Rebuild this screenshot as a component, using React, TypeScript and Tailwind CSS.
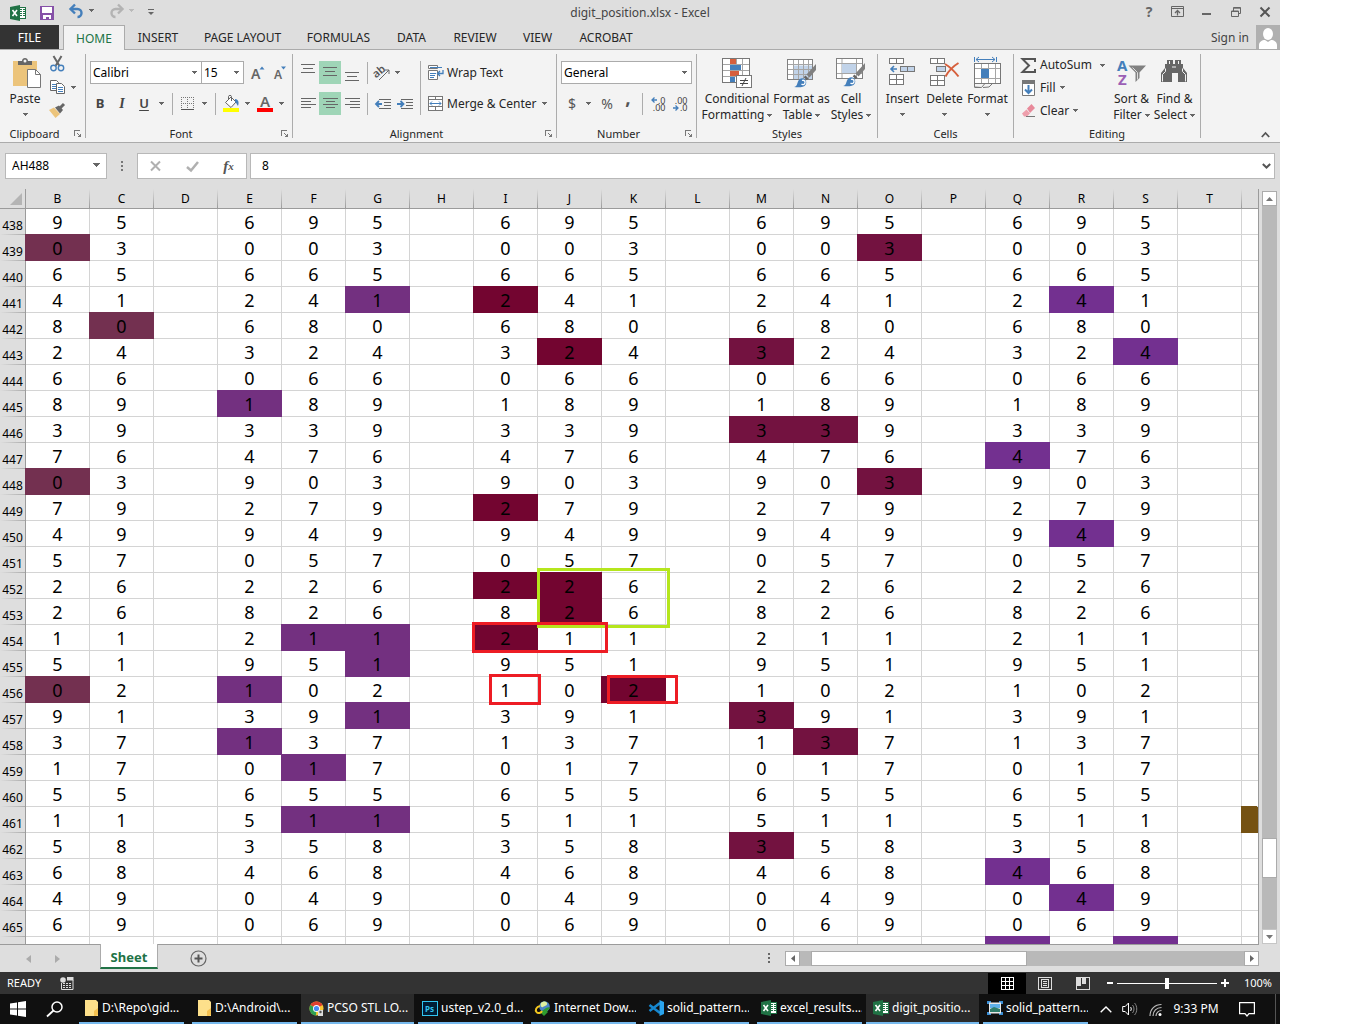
import type { ReactNode } from "react";

const UI = "font-['Noto_Sans','Open_Sans',sans-serif]";

/* ---------- small building blocks ---------- */

function Caret({ className = "text-[#666]" }: { className?: string }) {
  return (
    <svg width="5" height="3" viewBox="0 0 5 3" shapeRendering="crispEdges" className={`shrink-0 ${className}`} aria-hidden="true">
      <path d="M0 0h5v1H0zM1 1h3v1H1zM2 2h1v1H2z" fill="currentColor" />
    </svg>
  );
}

function Svg({ w, h, children, crisp = false, className = "" }: { w: number; h: number; children: ReactNode; crisp?: boolean; className?: string }) {
  return (
    <svg width={w} height={h} viewBox={`0 0 ${w} ${h}`} fill="none" shapeRendering={crisp ? "crispEdges" : "auto"} className={`shrink-0 overflow-visible ${className}`} aria-hidden="true">
      {children}
    </svg>
  );
}

function Btn({ label, className = "", children }: { label: string; className?: string; children?: ReactNode }) {
  return (
    <button type="button" aria-label={label} className={`flex shrink-0 items-center justify-center ${className}`}>
      {children}
    </button>
  );
}

const Divider = () => <div className="h-[84px] w-px shrink-0 bg-[#acacac]" />;
const Sep = () => <div className="h-[22px] w-px shrink-0 bg-[#acacac]" />;

function Launcher({ label }: { label: string }) {
  return (
    <Btn label={label} className="absolute right-[3px] bottom-1 h-[8px] w-[8px]">
      <Svg w={8} h={8} crisp>
        <path d="M0.500 6V0.500H6" stroke="#777" />
        <path d="M3 3l3 3" stroke="#777" />
        <path d="M7 3v4H3z" fill="#777" />
      </Svg>
    </Btn>
  );
}

function Group({ name, launcher, className, children }: { name: string; launcher?: boolean; className: string; children: ReactNode }) {
  return (
    <section aria-label={name} className={`relative flex h-[88px] shrink-0 flex-col ${className}`}>
      <div className="h-[71px]">{children}</div>
      <div className={`text-center text-[11px] leading-[17px] text-[#262626] ${launcher ? "pr-4" : ""}`}>{name}</div>
      {launcher && <Launcher label={`${name} settings`} />}
    </section>
  );
}

/* ---------- icons ---------- */

function ExcelIcon() {
  return (
    <Svg w={16} h={16}>
      <rect x="8.500" y="2.500" width="7" height="11" fill="#fff" stroke="#207245" />
      <path d="M10 4.500h2M13 4.500h2M10 6.500h2M13 6.500h2M10 8.500h2M13 8.500h2M10 10.500h2M13 10.500h2" stroke="#207245" />
      <path d="M0 2l10-2v16L0 14z" fill="#207245" />
      <path d="M2.500 5l4.500 6M7 5l-4.500 6" stroke="#fff" strokeWidth="1.600" />
    </Svg>
  );
}

function BrushTip({ x = 0, y = 0 }: { x?: number; y?: number }) {
  return (
    <g transform={`translate(${x} ${y})`}>
      <path d="M22 -1V5L15.500 12.500l-3-3z" fill="#808080" />
      <path d="M11.500 10.500l3 3-1.800 1.700-3-3z" fill="#666" />
      <path d="M0 22c3-.5 3-3 4-5.500 1.500-3.500 5-4 7-2s1.500 5-.5 6.500S4 22.500 0 22z" fill="#447fbb" />
      <path d="M8 15.500c2-.8 3.500.8 3 2.500s-2.500 2-3.500 1" stroke="#fff" strokeWidth="1.300" />
    </g>
  );
}

function FormatTableIcon() {
  return (
    <Svg w={30} h={30}>
      <rect x="0.500" y="2.500" width="25" height="20" fill="#fff" stroke="#808080" />
      <path d="M6.500 8.500h19v14h-19z" fill="#c1d3e9" />
      <path d="M1 7.500h24M1 12.500h24M1 17.500h24M6.500 3v19M11.500 3v19M16.500 3v19M21.500 3v19" stroke="#a5a5a5" />
      <rect x="0.500" y="2.500" width="25" height="20" stroke="#808080" />
      <BrushTip x={7} y={8} />
    </Svg>
  );
}

function CellStylesIcon() {
  return (
    <Svg w={30} h={30}>
      <rect x="0.500" y="1.500" width="26" height="20" fill="#fff" stroke="#808080" />
      <path d="M6 2v19M20.500 2v19M1 6.500h25M1 16.500h25" stroke="#a5a5a5" />
      <rect x="6" y="7" width="14" height="9" fill="#c1d3e9" />
      <BrushTip x={7} y={7} />
    </Svg>
  );
}

function ConditionalIcon() {
  return (
    <Svg w={30} h={31} crisp>
      <rect x="0.500" y="1.500" width="27" height="24" fill="#fff" stroke="#777" />
      <path d="M8.500 2v23M14.500 2v23M20.500 2v23M1 7.500h26M1 13.500h26M1 19.500h26" stroke="#a5a5a5" />
      <rect x="8" y="2" width="6" height="5" fill="#d65f3c" />
      <rect x="8" y="8" width="11" height="5" fill="#447fbb" />
      <rect x="8" y="14" width="9" height="5" fill="#d65f3c" />
      <rect x="8" y="20" width="5" height="5" fill="#447fbb" />
      <rect x="14.500" y="18.500" width="15" height="12" fill="#fff" stroke="#777" />
      <path d="M18 23.500h8M18 26.500h8M24 21l-4 8" stroke="#444" shapeRendering="auto" />
    </Svg>
  );
}

function InsertIcon() {
  return (
    <Svg w={27} h={30} crisp>
      <path d="M.5 1.500h14v5H.5zM7.500 1v5M.5 17.500h14v10H.5zM7.500 18v9M1 22.500h13" fill="#fff" stroke="#777" />
      <path d="M11.500 9.500h14v5h-14zM18.500 9v5" fill="#c1d3e9" stroke="#777" />
      <path d="M2 12h6M5 9l-3 3 3 3" stroke="#447fbb" strokeWidth="1.600" shapeRendering="auto" />
    </Svg>
  );
}

function DeleteIcon() {
  return (
    <Svg w={30} h={30}>
      <g shapeRendering="crispEdges">
        <path d="M.5 1.500h14v5H.5zM7.500 1v5M.5 18.500h14v10H.5zM7.500 19v9M1 23.500h13" fill="#fff" stroke="#777" />
        <path d="M6.500 9.500h9v5h-9z" fill="#c1d3e9" stroke="#777" />
      </g>
      <path d="M15 7c5 3 10 8 13.500 12.500M28.500 6c-5 3-10 8-13 13.500" stroke="#d65f3c" strokeWidth="2" />
    </Svg>
  );
}

function FormatIcon() {
  return (
    <Svg w={29} h={32} crisp>
      <path d="M1.500 0v5M23.500 0v5" stroke="#447fbb" />
      <path d="M3 2.500h19M6 0L3 2.500 6 5M19 0l3 2.500L19 5" stroke="#447fbb" shapeRendering="auto" />
      <rect x="1.500" y="6.500" width="26" height="20" fill="#fff" stroke="#777" />
      <path d="M8.500 7v19M15.500 7v19M22.500 7v19M2 11.500h25M2 21.500h25" stroke="#a5a5a5" />
      <rect x="8" y="12" width="8" height="9" fill="#447fbb" />
      <path d="M1.500 27v3l7 .5 3-3.500M10 30.500l6-.5 3-3M1.500 30.500h6" stroke="#777" shapeRendering="auto" />
    </Svg>
  );
}

function SortIcon() {
  return (
    <Svg w={30} h={30}>
      <text x="0" y="14" fill="#447fbb" fontSize="15" fontWeight="700">A</text>
      <text x="1" y="28" fill="#9b5fb5" fontSize="15" fontWeight="700">Z</text>
      <path d="M11.500 8.500h17.500l-6.500 7v5.500l-4 4v-9.500z" fill="#808080" />
      <path d="M15.500 10.500l5 5v7" stroke="#ddd" />
    </Svg>
  );
}

function BinocularsIcon() {
  return (
    <Svg w={27} h={25} className="mt-[2px]">
      <path d="M6 1h6v4h2V1h6v4h2v4l4 5v9h-9v-9h-6v9H0v-9l4-5V5h2z" fill="#666" />
      <path d="M4.500 9.500v3l-3 3v7M21.500 9.500v3l3 3v7M8.500 2v3M17.500 2v3" stroke="#f3f3f3" />
      <path d="M11 8h4" stroke="#f3f3f3" />
    </Svg>
  );
}

const lineSets: Record<string, [number, number][]> = {
  left: [[0, 15], [0, 10], [0, 15], [0, 10]],
  center: [[0, 15], [3, 12], [0, 15], [3, 12]],
  right: [[0, 15], [5, 15], [0, 15], [5, 15]],
  bar: [[0, 14], [2, 12], [0, 14]],
};

function Lines({ kind, gap = 3 }: { kind: string; gap?: number }) {
  const rows = lineSets[kind];
  return (
    <Svg w={15} h={11} crisp>
      {rows.map(([a, b], i) => (
        <path key={i} d={`M${a} ${i * gap + 0.5}H${b}`} stroke="#666" />
      ))}
    </Svg>
  );
}

function IndentIcon({ flip = false }: { flip?: boolean }) {
  return (
    <Svg w={16} h={12}>
      <path d="M4 1.500h12M9 4.500h7M9 7.500h7M4 10.500h12" stroke="#666" shapeRendering="crispEdges" />
      <path d={flip ? "M0 6h6M3.500 3l3 3-3 3" : "M7 6H1M4 3L1 6l3 3"} stroke="#447fbb" strokeWidth="1.800" />
    </Svg>
  );
}

function DecimalIcon({ more }: { more: boolean }) {
  return (
    <span className="relative flex h-[14px] w-[15px] flex-col text-right text-[9px] leading-[7px] text-[#444]">
      <span>{more ? ".0" : ".00"}</span>
      <span>{more ? ".00" : ".0"}</span>
      <svg width="6" height="6" viewBox="0 0 6 6" fill="none" className={`absolute left-0 ${more ? "top-0" : "bottom-0"}`} aria-hidden="true">
        <path d={more ? "M6 3H1M3.500 .5L1 3l2.500 2.500" : "M0 3h5M2.500 .5L5 3 2.500 5.500"} stroke="#447fbb" strokeWidth="1.300" />
      </svg>
    </span>
  );
}

/* ---------- window chrome ---------- */

function TitleBar() {
  return (
    <header className="flex h-[25px] items-center text-[#444]">
      <div className="flex w-[400px] items-center pl-[10px]">
        <ExcelIcon />
        <Btn label="Save" className="ml-[14px]">
          <Svg w={14} h={14} crisp>
            <path d="M0 0h14v14H0z" fill="#8651a8" />
            <path d="M2 1h10v6H2zM3 9h8v4H9v-2H6v2H3z" fill="#fff" />
          </Svg>
        </Btn>
        <Btn label="Undo" className="ml-[15px] pb-[3px]">
          <Svg w={15} h={14}>
            <path d="M2 5h6.500a4 4 0 0 1 0 8" stroke="#447fbb" strokeWidth="2.400" />
            <path d="M6 .5L1.500 5 6 9.500" stroke="#447fbb" strokeWidth="2.400" />
          </Svg>
        </Btn>
        <Btn label="Undo list" className="ml-[5px] pb-1"><Caret /></Btn>
        <Btn label="Redo" className="ml-[15px] pb-[3px]">
          <Svg w={15} h={14}>
            <path d="M13 5H6.500a4 4 0 0 0 0 8" stroke="#b3b3b3" strokeWidth="2.400" />
            <path d="M9 .5L13.500 5 9 9.500" stroke="#b3b3b3" strokeWidth="2.400" />
          </Svg>
        </Btn>
        <Btn label="Redo list" className="ml-[5px] pb-1"><Caret className="text-[#bbb]" /></Btn>
        <Btn label="Customize Quick Access Toolbar" className="ml-[14px]">
          <Svg w={6} h={7}><path d="M0 .5h6" stroke="#666" /><path d="M0 3h6L3 6z" fill="#666" /></Svg>
        </Btn>
      </div>
      <h1 className="flex-1 text-center text-[12px] leading-[25px]">digit_position.xlsx - Excel</h1>
      <div className="flex w-[400px] items-center justify-end pr-[10px] pb-[2px] text-[#666]">
        <Btn label="Help" className="w-4 text-[14px] leading-4 font-bold">?</Btn>
        <Btn label="Ribbon Display Options" className="ml-[14px]">
          <Svg w={13} h={11}><path d="M.5.5h12v10H.5zM1 2.500h11" stroke="#666" /><path d="M6.500 9.500v-5M4 7l2.500-2.500L9 7" stroke="#666" strokeWidth="1.300" /></Svg>
        </Btn>
        <Btn label="Minimize" className="ml-[17px]">
          <Svg w={10} h={10}><path d="M1 7h9" stroke="#666" strokeWidth="2" /></Svg>
        </Btn>
        <Btn label="Restore Down" className="ml-5">
          <Svg w={10} h={10}><path d="M.5 4h7v5.500h-7zM.5 4.500h7M2.500 4V.5h7v6H8M2.500 1.200h7" stroke="#666" /></Svg>
        </Btn>
        <Btn label="Close" className="ml-[19px]">
          <Svg w={10} h={10}><path d="M.5.5l9 9M9.500.5l-9 9" stroke="#555" strokeWidth="2" /></Svg>
        </Btn>
      </div>
    </header>
  );
}

const tabs: [string, string][] = [
  ["INSERT", "w-[66px]"],
  ["PAGE LAYOUT", "w-[103px]"],
  ["FORMULAS", "w-[89px]"],
  ["DATA", "w-[57px]"],
  ["REVIEW", "w-[70px]"],
  ["VIEW", "w-[55px]"],
  ["ACROBAT", "w-[82px]"],
];

function TabStrip() {
  return (
    <nav className="flex h-[25px] border-b border-[#ababab] text-[12px] leading-[25px] text-[#262626]">
      <button type="button" className="mr-1 w-[59px] bg-[#333] text-white">FILE</button>
      <button type="button" className="relative h-[25px] w-[62px] border border-b-0 border-[#ababab] bg-[#f3f3f3] leading-[23px] text-[#217346]">HOME</button>
      {tabs.map(([name, width]) => (
        <button type="button" key={name} className={`${width} whitespace-nowrap`}>{name}</button>
      ))}
      <div className="ml-auto flex">
        <button type="button" className="mr-[7px] leading-[23px] text-[#444]">Sign in</button>
        <Svg w={24} h={24}>
          <rect width="24" height="24" fill="#b0b0b0" />
          <ellipse cx="12" cy="9" rx="5" ry="6" fill="#fff" />
          <path d="M3 24v-4c0-3 3-5 6-5l3 2 3-2c3 0 6 2 6 5v4z" fill="#fff" />
        </Svg>
      </div>
    </nav>
  );
}

function Combo({ label, value, className }: { label: string; value: string; className: string }) {
  return (
    <div className={`flex h-[23px] shrink-0 items-center border border-[#ababab] bg-white pr-1 ${className}`}>
      <select aria-label={label} defaultValue={value} className="h-full min-w-0 flex-1 appearance-none bg-transparent pl-[2px] text-[12px] leading-[21px] text-black">
        <option>{value}</option>
      </select>
      <Caret />
    </div>
  );
}

function Big({ icon, lines, caret, className }: { icon: ReactNode; lines: string[]; caret: "inline" | "below"; className: string }) {
  return (
    <button type="button" className={`flex h-[71px] shrink-0 flex-col items-center text-[12px] leading-4 whitespace-nowrap text-[#262626] ${className}`}>
      <span className="flex h-[37px] shrink-0 items-start justify-center pt-[3px]">{icon}</span>
      {lines.map((line, i) => (
        <span key={line} className="flex h-4 shrink-0 items-center gap-[3px]">
          {line}
          {caret === "inline" && i === lines.length - 1 && <Caret />}
        </span>
      ))}
      {caret === "below" && <span className="flex h-[18px] w-full shrink-0 items-center justify-center pb-[3px]"><Caret /></span>}
    </button>
  );
}

function Ribbon() {
  return (
    <div className="flex h-[93px] border-b border-[#ababab] bg-[#f3f3f3] pt-1">
      <Group name="Clipboard" launcher className="w-[85px]">
        <div className="flex">
          <Big
            className="ml-[5px] w-[40px]"
            caret="below"
            lines={["Paste"]}
            icon={
              <Svg w={30} h={31} className="ml-[4px]">
                <path d="M1 4h24v25H1z" fill="#ecc47b" />
                <path d="M6 8V4h4c0-4 6-4 6 0h4v4z" fill="#666" />
                <circle cx="13" cy="4" r="1.500" fill="#f3f3f3" />
                <path d="M15.500 12.500h8l5 5v13h-13z" fill="#fff" stroke="#777" />
                <path d="M23.500 12.500v5h5" stroke="#777" />
              </Svg>
            }
          />
          <div className="ml-1 flex flex-col">
            <Btn label="Cut" className="mt-[2px] h-4 w-4">
              <Svg w={15} h={16}>
                <path d="M3.500 0l6 10M11.500 0l-6 10" stroke="#666" strokeWidth="2" />
                <circle cx="3.500" cy="12" r="2.700" stroke="#447fbb" strokeWidth="1.400" />
                <circle cx="11" cy="12" r="2.700" stroke="#447fbb" strokeWidth="1.400" />
              </Svg>
            </Btn>
            <div className="mt-[7px] flex items-center">
              <Btn label="Copy" className="h-4 w-4">
                <Svg w={15} h={15}>
                  <path d="M.5.500h6l2 2v8h-8z" fill="#fff" stroke="#666" />
                  <path d="M2 4.500h4M2 6.500h4M2 8.500h4" stroke="#447fbb" />
                  <path d="M6.500 3.500h5l3 3v7h-8z" fill="#fff" stroke="#666" />
                  <path d="M8 7.500h5M8 9.500h5M8 11.500h5" stroke="#447fbb" />
                </Svg>
              </Btn>
              <Btn label="Copy options" className="w-4"><Caret /></Btn>
            </div>
            <Btn label="Format Painter" className="mt-[7px] h-4 w-[17px]">
              <Svg w={17} h={15}>
                <path d="M0 7l5-2.500L11 11 6.500 15z" fill="#ecc47b" />
                <path d="M6 4.500l4-2 4 4.500-3 3.500z" fill="#666" />
                <path d="M11 5l4-4" stroke="#666" strokeWidth="3" />
              </Svg>
            </Btn>
          </div>
        </div>
      </Group>
      <Divider />
      <Group name="Font" launcher className="w-[206px]">
        <div className="flex flex-col gap-2 pt-[7px] text-[#444]">
          <div className="flex items-center pl-1">
            <Combo label="Font" value="Calibri" className="w-[112px]" />
            <Combo label="Font Size" value="15" className="-ml-px w-[43px]" />
            <Btn label="Increase Font Size" className="ml-[3px] h-[22px] w-[22px]">
              <Svg w={14} h={14}><text x="0" y="13" fontSize="14" fontWeight="600" fill="#666">A</text><path d="M8.500 3.500h5L11 .5z" fill="#447fbb" /></Svg>
            </Btn>
            <Btn label="Decrease Font Size" className="h-[22px] w-[22px]">
              <Svg w={12} h={14}><text x="0" y="13" fontSize="12" fontWeight="600" fill="#666">A</text><path d="M7 .5h5L9.500 3.500z" fill="#447fbb" /></Svg>
            </Btn>
          </div>
          <div className="flex h-[23px] items-center pl-[3px] text-[13px]">
            <Btn label="Bold" className="w-[22px] font-bold">B</Btn>
            <Btn label="Italic" className="w-[22px] font-['Liberation_Serif',serif] text-[14px] font-bold italic">I</Btn>
            <Btn label="Underline" className="w-[22px] font-semibold underline underline-offset-2">U</Btn>
            <Btn label="Underline options" className="w-[13px]"><Caret /></Btn>
            <div className="ml-[4px]"><Sep /></div>
            <Btn label="Borders" className="ml-[6px] w-[17px]">
              <Svg w={14} h={14} crisp>
                <path d="M.5 0v13M6.500 0v13M12.500 0v13M0 .5h13M0 6.500h13" stroke="#777" strokeDasharray="1 1" />
                <path d="M0 12.500h13" stroke="#555" />
              </Svg>
            </Btn>
            <Btn label="Border options" className="w-[16px]"><Caret /></Btn>
            <div className="ml-[3px]"><Sep /></div>
            <Btn label="Fill Color" className="ml-[6px] w-[18px]">
              <Svg w={17} h={17}>
                <path d="M2.500 7.500L8 2l5 5-5 5.500z" fill="#fff" stroke="#666" />
                <path d="M5.500 5V1.500c0-1.500 3-1.500 3 0V6" stroke="#666" />
                <path d="M12 4c3 0 4.500 3 3 7-1.500-2-2-4-3-4z" fill="#447fbb" />
                <path d="M0 13h16v4H0z" fill="#ff0" />
              </Svg>
            </Btn>
            <Btn label="Fill options" className="w-[14px]"><Caret /></Btn>
            <Btn label="Font Color" className="ml-[2px] w-[17px]">
              <Svg w={16} h={17}><text x="3" y="12" fontSize="15" fontWeight="600" fill="#666">A</text><path d="M0 13h16v4H0z" fill="#f00" /></Svg>
            </Btn>
            <Btn label="Font Color options" className="w-[16px]"><Caret /></Btn>
          </div>
        </div>
      </Group>
      <Divider />
      <Group name="Alignment" launcher className="w-[263px]">
        <div className="flex pt-[7px] text-[12px] whitespace-nowrap text-[#262626]">
          <div className="flex w-[127px] flex-col gap-2 pl-1">
            <div className="flex h-[23px] items-center">
              <Btn label="Top Align" className="h-[23px] w-[22px] pb-[6px]"><Lines kind="bar" gap={4} /></Btn>
              <Btn label="Middle Align" className="h-[23px] w-[22px] bg-[#9fd5b7]"><Lines kind="bar" gap={4} /></Btn>
              <Btn label="Bottom Align" className="h-[23px] w-[22px] pt-[10px]"><Lines kind="bar" gap={4} /></Btn>
              <div className="ml-1"><Sep /></div>
              <Btn label="Orientation" className="ml-[5px] w-[18px]">
                <Svg w={17} h={16}>
                  <text x="0" y="10" fontSize="11" fontWeight="600" fill="#555" transform="rotate(-40 6 9)">ab</text>
                  <path d="M5 15L15 5M11 5h4v4" stroke="#666" />
                </Svg>
              </Btn>
              <Btn label="Orientation options" className="w-3"><Caret /></Btn>
            </div>
            <div className="flex h-[23px] items-center">
              <Btn label="Align Left" className="h-[23px] w-[22px]"><Lines kind="left" /></Btn>
              <Btn label="Center" className="h-[23px] w-[22px] bg-[#9fd5b7]"><Lines kind="center" /></Btn>
              <Btn label="Align Right" className="h-[23px] w-[22px]"><Lines kind="right" /></Btn>
              <div className="ml-1"><Sep /></div>
              <Btn label="Decrease Indent" className="ml-1 w-[22px]"><IndentIcon /></Btn>
              <Btn label="Increase Indent" className="w-[22px]"><IndentIcon flip /></Btn>
            </div>
          </div>
          <div className="h-[54px] w-px bg-[#acacac]" />
          <div className="flex flex-col gap-2 pl-[7px]">
            <button type="button" className="flex h-[23px] items-center gap-[3px]">
              <Svg w={16} h={16}>
                <path d="M.5.500h9v3h-9zM.5 5.500h9v9h-9z" fill="#fff" stroke="#777" />
                <path d="M2 2.500h12M2 8.500h6M2 10.500h5M2 12.500h4" stroke="#447fbb" />
                <path d="M15 5v3.500H9.500M12 6L9.500 8.500 12 11" stroke="#447fbb" strokeWidth="1.300" />
              </Svg>
              Wrap Text
            </button>
            <div className="flex h-[23px] items-center">
              <button type="button" className="flex items-center gap-1">
                <Svg w={15} h={15} crisp>
                  <path d="M.5.500h14v14H.5zM7.500.500v3M7.500 11v3M1 3.500h13M1 10.500h13" fill="#fff" stroke="#777" />
                  <path d="M2 7.500h11M4 5.500l-2 2 2 2M11 5.500l2 2-2 2" stroke="#447fbb" shapeRendering="auto" />
                </Svg>
                Merge &amp; Center
              </button>
              <Btn label="Merge options" className="w-4"><Caret /></Btn>
            </div>
          </div>
        </div>
      </Group>
      <Divider />
      <Group name="Number" launcher className="w-[139px]">
        <div className="flex flex-col gap-2 pt-[7px] pl-1 text-[#555]">
          <Combo label="Number Format" value="General" className="w-[131px]" />
          <div className="flex h-[23px] items-center text-[14px]">
            <Btn label="Accounting Number Format" className="w-[22px]">$</Btn>
            <Btn label="Accounting options" className="w-[11px]"><Caret /></Btn>
            <Btn label="Percent Style" className="ml-[2px] w-[22px]">%</Btn>
            <Btn label="Comma Style" className="w-[20px] pb-[14px] text-[19px] leading-4 font-bold">,</Btn>
            <div className="ml-1"><Sep /></div>
            <Btn label="Increase Decimal" className="ml-1 w-[22px]"><DecimalIcon more /></Btn>
            <Btn label="Decrease Decimal" className="w-[22px]"><DecimalIcon more={false} /></Btn>
          </div>
        </div>
      </Group>
      <Divider />
      <Group name="Styles" className="w-[180px]">
        <div className="flex">
          <Big className="ml-[3px] w-[74px]" caret="inline" lines={["Conditional", "Formatting"]} icon={<ConditionalIcon />} />
          <Big className="w-[55px]" caret="inline" lines={["Format as", "Table"]} icon={<FormatTableIcon />} />
          <Big className="w-[44px]" caret="inline" lines={["Cell", "Styles"]} icon={<CellStylesIcon />} />
        </div>
      </Group>
      <Divider />
      <Group name="Cells" className="w-[135px]">
        <div className="flex pl-[4px]">
          <Big className="w-[41px]" caret="below" lines={["Insert"]} icon={<InsertIcon />} />
          <Big className="w-[43px]" caret="below" lines={["Delete"]} icon={<DeleteIcon />} />
          <Big className="w-[43px]" caret="below" lines={["Format"]} icon={<FormatIcon />} />
        </div>
      </Group>
      <Divider />
      <Group name="Editing" className="w-[186px]">
        <div className="flex">
          <div className="flex w-[97px] flex-col pl-[7px] text-[12px] text-[#262626]">
            <div className="flex h-[22px] items-center">
              <button type="button" className="flex items-center gap-1">
                <Svg w={15} h={15}><path d="M14 4V1H1.500L8 7.500 1.500 14H14v-3" stroke="#555" strokeWidth="2" /></Svg>
                AutoSum
              </button>
              <Btn label="AutoSum options" className="ml-[6px] w-[10px]"><Caret /></Btn>
            </div>
            <button type="button" className="flex h-[23px] items-center gap-1">
              <Svg w={15} h={16}>
                <path d="M1.500.500h12v15h-12z" fill="#fff" stroke="#777" /><path d="M1 0h13v4H1z" fill="#777" />
                <path d="M7.500 5v8M4 9.500L7.500 13 11 9.500" stroke="#447fbb" strokeWidth="2" />
              </Svg>
              Fill<Caret />
            </button>
            <button type="button" className="flex h-[23px] items-center gap-1">
              <Svg w={15} h={14}>
                <path d="M6 4.500L10.500 0 14 4l-5 5z" fill="#e8899a" />
                <path d="M5.500 5.500l3.500 4-3 3H3L1 9.500z" fill="#ee9fac" />
                <path d="M5 12.500h9" stroke="#777" />
              </Svg>
              Clear<Caret />
            </button>
          </div>
          <Big className="w-[41px]" caret="inline" lines={["Sort &", "Filter"]} icon={<SortIcon />} />
          <Big className="w-[45px]" caret="inline" lines={["Find &", "Select"]} icon={<BinocularsIcon />} />
        </div>
      </Group>
      <Divider />
      <Btn label="Collapse the Ribbon" className="mr-[10px] mb-1 ml-auto self-end">
        <Svg w={9} h={7}><path d="M.8 6l3.700-4L8.200 6" stroke="#555" strokeWidth="1.800" /></Svg>
      </Btn>
    </div>
  );
}

function FormulaBar() {
  return (
    <div className="flex items-center pt-[10px] pr-[5px] pb-[10px] pl-[5px] text-[12px]">
      <div className="flex h-[26px] w-[102px] items-center border border-[#b8b8b8] bg-white pr-[6px]">
        <input aria-label="Name Box" defaultValue="AH488" className="min-w-0 flex-1 bg-transparent pl-[6px]" />
        <Svg w={7} h={4} crisp className="mb-[2px]"><path d="M0 0h7v1H0zM1 1h5v1H1zM2 2h3v1H2zM3 3h1v1H3z" fill="#666" /></Svg>
      </div>
      <Svg w={2} h={12} className="mx-[14px]" crisp><path d="M0 1h2v2H0zM0 5h2v2H0zM0 9h2v2H0z" fill="#777" /></Svg>
      <div className="flex h-[26px] w-[110px] items-center justify-around border border-[#b8b8b8] bg-white">
        <Btn label="Cancel"><Svg w={11} h={10}><path d="M1 .5l9 9M10 .5l-9 9" stroke="#b0b0b0" strokeWidth="2" /></Svg></Btn>
        <Btn label="Enter"><Svg w={13} h={11}><path d="M1 6l4 3.500L12 1" stroke="#b0b0b0" strokeWidth="2.500" /></Svg></Btn>
        <Btn label="Insert Function" className="font-['Liberation_Serif',serif] text-[15px] leading-4 font-bold text-[#555] italic">f<span className="text-[11px]">x</span></Btn>
      </div>
      <div className="ml-[3px] flex h-[26px] flex-1 items-center border border-[#b8b8b8] bg-white pr-[3px]">
        <input aria-label="Formula" defaultValue="8" className="min-w-0 flex-1 bg-transparent pl-[11px]" />
        <Btn label="Expand Formula Bar"><Svg w={9} h={6}><path d="M.8 1l3.700 3.500L8.200 1" stroke="#555" strokeWidth="2" /></Svg></Btn>
      </div>
    </div>
  );
}

/* ---------- worksheet ---------- */

const columns = "BCDEFGHIJKLMNOPQRST".split("");
const draws = [
  "695", "003", "665", "241", "680", "324", "066", "189", "339", "476", "903", "279", "949", "057",
  "226", "826", "211", "951", "102", "391", "137", "017", "655", "511", "358", "468", "049", "069",
];
const FIRST_ROW = 438;

// Position of the drawn digit shown by each column, and the digit its block highlights.
const columnInfo: Record<string, [number, string]> = {
  B: [1, "0"], C: [2, "0"],
  E: [0, "1"], F: [1, "1"], G: [2, "1"],
  I: [0, "2"], J: [1, "2"], K: [2, "2"],
  M: [0, "3"], N: [1, "3"], O: [2, "3"],
  Q: [0, "4"], R: [1, "4"], S: [2, "4"],
};

const fills: Record<string, string> = {
  "0": "border-[#733050] bg-[#733050] shadow-[-1px_-1px_0_#733050,-1px_0_0_#733050,0_-1px_0_#733050]",
  "1": "border-[#733080] bg-[#733080] shadow-[-1px_-1px_0_#733080,-1px_0_0_#733080,0_-1px_0_#733080]",
  "2": "border-[#730530] bg-[#730530] shadow-[-1px_-1px_0_#730530,-1px_0_0_#730530,0_-1px_0_#730530]",
  "3": "border-[#731240] bg-[#731240] shadow-[-1px_-1px_0_#731240,-1px_0_0_#731240,0_-1px_0_#731240]",
  "4": "border-[#733090] bg-[#733090] shadow-[-1px_-1px_0_#733090,-1px_0_0_#733090,0_-1px_0_#733090]",
};

const rowHead = "border-r border-[#9b9b9b] bg-[linear-gradient(to_right,#dedede,#ababab)] bg-[length:100%_1px] bg-bottom bg-no-repeat";
const colHead = "bg-[linear-gradient(to_bottom,#dedede,#9b9b9b)] bg-[length:1px_100%] bg-right bg-no-repeat";

function Sheet() {
  return (
    <div className="flex">
      <div className="relative min-w-0 flex-1 overflow-hidden border-r border-[#9b9b9b]">
        <table className="w-full table-fixed border-separate border-spacing-0">
          <thead>
            <tr className="h-5 text-[12px] leading-[19px]">
              <th className="w-[26px] border-r border-b border-[#9b9b9b] p-0" aria-label="Select All">
                <Svg w={12} h={12} className="ml-[10px]"><path d="M12 0v12H0z" fill="#b4b4b4" /></Svg>
              </th>
              {columns.map((c) => (
                <th key={c} scope="col" className={`w-16 border-b border-b-[#9b9b9b] p-0 pr-px font-normal ${colHead}`}>{c}</th>
              ))}
              <th className="border-b border-[#9b9b9b] p-0" />
            </tr>
          </thead>
          <tbody className="text-[18px] leading-[23px]">
            {draws.map((draw, i) => (
              <tr key={i} className="h-[26px]">
                <th scope="row" className={`p-0 pt-[7px] text-center text-[12px] leading-[17px] font-normal ${rowHead}`}>{FIRST_ROW + i}</th>
                {columns.map((c) => {
                  const info = columnInfo[c];
                  const digit = info ? draw[info[0]] : "";
                  const on = info && digit === info[1];
                  return (
                    <td key={c} className={`border-r border-b p-0 pt-[2px] text-center ${on ? fills[digit] : "border-[#d4d4d4] bg-white"}`}>{digit}</td>
                  );
                })}
                <td className={`border-b p-0 ${FIRST_ROW + i === 461 ? "border-[#755213] bg-[#755213] shadow-[-1px_-1px_0_#755213,-1px_0_0_#755213]" : "border-[#d4d4d4] bg-white"}`} />
              </tr>
            ))}
            <tr className="h-[7px]">
              <th className="border-r border-[#9b9b9b] p-0" />
              {columns.map((c) => (
                <td key={c} className={`border-r p-0 ${c === "Q" || c === "S" ? fills["4"] : "border-[#d4d4d4] bg-white"}`} />
              ))}
              <td className="bg-white p-0" />
            </tr>
          </tbody>
        </table>
        <div className="absolute top-[379px] left-[537px] h-[60px] w-[133px] border-3 border-[#b5e61d]" />
        <div className="absolute top-[433px] left-[472px] h-[31px] w-[136px] border-3 border-[#ed1c24]" />
        <div className="absolute top-[485px] left-[489px] h-[31px] w-[52px] border-3 border-[#ed1c24]" />
        <div className="absolute top-[486px] left-[607px] h-[29px] w-[71px] border-3 border-[#ed1c24]" />
      </div>
      <div className="flex w-[21px] flex-col items-center pt-[2px] pr-px">
        <Btn label="Scroll up" className="h-[15px] w-[15px] border border-[#ababab] bg-white"><Svg w={7} h={4}><path d="M0 4h7L3.500 0z" fill="#777" /></Svg></Btn>
        <div className="flex w-[15px] flex-1 flex-col justify-end bg-[#b9b9b9] pb-[51px]">
          <div className="h-10 border border-[#ababab] bg-white" />
        </div>
        <Btn label="Scroll down" className="h-[15px] w-[15px] border border-[#c6c6c6] bg-white"><Svg w={7} h={4}><path d="M0 0h7L3.500 4z" fill="#777" /></Svg></Btn>
      </div>
    </div>
  );
}

function SheetTabs() {
  return (
    <div className="flex h-7 items-start">
      <div className="flex h-7 w-[100px] items-center border-t border-[#9b9b9b] pl-[26px]">
        <Btn label="Previous sheet"><Svg w={5} h={8}><path d="M5 0v8L0 4z" fill="#ababab" /></Svg></Btn>
        <Btn label="Next sheet" className="ml-[24px]"><Svg w={5} h={8}><path d="M0 0v8l5-4z" fill="#ababab" /></Svg></Btn>
      </div>
      <button type="button" className="h-[25px] w-[58px] border-x border-b-2 border-x-[#ababab] border-b-[#217346] bg-white pt-[3px] text-[13px] leading-5 font-bold text-[#217346]">Sheet</button>
      <div className="flex h-7 min-w-0 flex-1 items-center border-t border-[#9b9b9b]">
        <Btn label="New sheet" className="ml-8">
          <Svg w={17} h={17}><circle cx="8.500" cy="8.500" r="7.500" stroke="#666" strokeWidth="1.200" /><path d="M8.500 4.500v8M4.500 8.500h8" stroke="#555" strokeWidth="2" /></Svg>
        </Btn>
        <Svg w={2} h={11} className="mr-[15px] ml-auto" crisp><path d="M0 0h2v2H0zM0 4h2v2H0zM0 8h2v2H0z" fill="#666" /></Svg>
        <div className="flex h-[15px] w-[474px] bg-[#b9b9b9]">
          <Btn label="Scroll left" className="w-[15px] border border-[#ababab] bg-white"><Svg w={4} h={7}><path d="M4 0v7L0 3.500z" fill="#666" /></Svg></Btn>
          <div className="ml-[11px] w-[216px] border border-[#ababab] bg-white" />
          <Btn label="Scroll right" className="ml-auto w-[15px] border border-[#ababab] bg-white"><Svg w={4} h={7}><path d="M0 0v7l4-3.500z" fill="#666" /></Svg></Btn>
        </div>
      </div>
      <div className="h-7 w-[21px]" />
    </div>
  );
}

function StatusBar() {
  return (
    <div className="flex h-[22px] items-center bg-[#333] pl-[7px] text-[11px] text-white">
      <span>READY</span>
      <Btn label="Record Macro" className="ml-[19px]">
        <Svg w={14} h={13}>
          <path d="M13 3v9.500H1.500V6" stroke="#ddd" /><path d="M7 0h6.500v3.500H7z" fill="#ddd" />
          <circle cx="3" cy="3" r="2.800" fill="#ddd" />
          <path d="M3 6.500h9M3 8.500h9M3 10.500h9" stroke="#ddd" strokeDasharray="2 1" />
        </Svg>
      </Btn>
      <div className="ml-auto flex items-center">
        <Btn label="Normal" className="h-[21px] w-[38px] bg-black">
          <Svg w={13} h={13} crisp><path d="M.5.500h12v12H.5zM4.500 0v13M8.500 0v13M0 4.500h13M0 8.500h13" stroke="#fff" /></Svg>
        </Btn>
        <Btn label="Page Layout" className="w-[38px]">
          <Svg w={14} h={13} crisp><path d="M.5.500h13v12H.5zM3.500 2.500h7v8h-7zM5 4.500h4M5 6.500h4M5 8.500h4" stroke="#ddd" /></Svg>
        </Btn>
        <Btn label="Page Break Preview" className="w-[38px]">
          <Svg w={14} h={13} crisp><path d="M.5.500h13v12H.5z" stroke="#ddd" /><path d="M0 0h5v9H0zM6 0h4v7H6z" fill="#ddd" /></Svg>
        </Btn>
        <Btn label="Zoom out" className="ml-1 w-[8px]"><Svg w={6} h={2}><path d="M0 1h6" stroke="#fff" strokeWidth="2" /></Svg></Btn>
        <input
          type="range"
          aria-label="Zoom"
          defaultValue={50}
          className="mx-[3px] h-[11px] w-[100px] appearance-none bg-transparent [&::-webkit-slider-runnable-track]:h-px [&::-webkit-slider-runnable-track]:bg-white [&::-webkit-slider-thumb]:-mt-[5px] [&::-webkit-slider-thumb]:h-[11px] [&::-webkit-slider-thumb]:w-1 [&::-webkit-slider-thumb]:appearance-none [&::-webkit-slider-thumb]:bg-white"
        />
        <Btn label="Zoom in" className="w-[10px]"><Svg w={8} h={8}><path d="M0 4h8M4 0v8" stroke="#fff" strokeWidth="2" /></Svg></Btn>
        <button type="button" className="w-[50px] pr-2 text-right">100%</button>
      </div>
    </div>
  );
}

/* ---------- taskbar ---------- */

const FolderIcon = () => (
  <Svg w={13} h={16}><path d="M0 0h11l2 2v14H0z" fill="#fde08b" /><path d="M9 11l4-3v7l-2 1H9z" fill="#f4c04f" /></Svg>
);

const taskItems: { name: string; active?: boolean; icon: ReactNode }[] = [
  { name: "D:\\Repo\\gid...", icon: <FolderIcon /> },
  { name: "D:\\Android\\...", icon: <FolderIcon /> },
  {
    name: "PCSO STL LO...",
    active: true,
    icon: (
      <Svg w={15} h={15}>
        <circle cx="7.500" cy="7.500" r="7" fill="#fcc934" />
        <path d="M7.500 7.500L1.400 4a7 7 0 0 1 12.200 0z" fill="#e0402f" />
        <path d="M7.500 7.500L1.400 4a7 7 0 0 0 5.600 10.500z" fill="#2fa052" />
        <circle cx="7.500" cy="7.500" r="3.500" fill="#fff" /><circle cx="7.500" cy="7.500" r="2.600" fill="#4a8af4" />
        <path d="M9 9h5v6H9z" fill="#ddd" /><circle cx="11.500" cy="11" r="1.200" fill="#555" />
      </Svg>
    ),
  },
  {
    name: "ustep_v2.0_d...",
    icon: (
      <Svg w={16} h={15}>
        <rect x=".5" y=".5" width="15" height="14" fill="#001e36" stroke="#31c5f0" />
        <text x="3" y="11" fontSize="8" fontWeight="700" fill="#31c5f0">Ps</text>
      </Svg>
    ),
  },
  {
    name: "Internet Dow...",
    icon: (
      <Svg w={16} h={15}>
        <circle cx="9.500" cy="5.500" r="5.300" fill="#4b86c9" />
        <path d="M6 2c2-2 5-2 6 0s-2 3-4 4-3-2-2-4z" fill="#dff0a0" />
        <path d="M11 7c2-1 3-1 4 0l-3 3 1 1-4 4-4-4 2-1z" fill="#2f9b2f" />
        <path d="M5 5c-4 1-5 4-3.500 6S6 12 7 10" stroke="#f2c61f" strokeWidth="2" />
      </Svg>
    ),
  },
  {
    name: "solid_pattern...",
    icon: (
      <Svg w={16} h={16}>
        <path d="M12 3L1.500 11M12 13L1.500 5" stroke="#1687cf" strokeWidth="2.600" />
        <path d="M11.500 0L16 2v12l-4.500 2z" fill="#2aa4ee" />
      </Svg>
    ),
  },
  { name: "excel_results....", icon: <ExcelIcon /> },
  { name: "digit_positio...", active: true, icon: <ExcelIcon /> },
  {
    name: "solid_pattern...",
    icon: (
      <Svg w={16} h={14}>
        <path d="M0 0h4v3H0zM12 0h4v3h-4zM0 11h4v3H0zM12 11h4v3h-4z" fill="#3b8fd6" />
        <rect x="2" y="1.500" width="12" height="11" fill="#e8e8e8" />
        <rect x="3" y="3" width="10" height="4" fill="#5fb0e8" /><path d="M3 8l4-2 6 2v3H3z" fill="#2f7d6a" />
      </Svg>
    ),
  },
];

function Taskbar() {
  return (
    <footer className="flex h-[30px] items-stretch bg-[#101010] text-[12px] text-white">
      <Btn label="Start" className="w-9">
        <Svg w={16} h={16}><path d="M0 2.500L7 1.500v6H0zM8 1.300L16 0v7.500H8zM0 8.500h7v6l-7-1zM8 8.500h8V16l-8-1.300z" fill="#fff" /></Svg>
      </Btn>
      <Btn label="Search" className="w-[39px] pr-[3px]">
        <Svg w={17} h={16}><circle cx="11" cy="6" r="5" stroke="#fff" strokeWidth="1.500" /><path d="M7.500 9.500L1 15.500" stroke="#fff" strokeWidth="1.800" /></Svg>
      </Btn>
      {taskItems.map((t, i) => (
        <button
          type="button"
          key={i}
          className={`flex h-[30px] shrink-0 items-center gap-[3px] overflow-hidden border-b-2 border-[#76b9ed] whitespace-nowrap ${t.active ? "w-[113px] bg-[#2b2b2b] pl-[7px]" : "mx-1 w-[105px] pl-1"}`}
        >
          <span className="flex w-4 shrink-0 justify-center">{t.icon}</span>
          {t.name}
        </button>
      ))}
      <div className="ml-auto flex items-center">
        <Btn label="Show hidden icons"><Svg w={12} h={7}><path d="M.7 6.300L6 1l5.300 5.300" stroke="#fff" strokeWidth="1.400" /></Svg></Btn>
        <Btn label="Volume" className="ml-[10px]">
          <Svg w={16} h={14}>
            <path d="M.7 4.500h2.500L6.500 1v12L3.200 9.500H.7z" stroke="#fff" />
            <path d="M8.500 5c1 1 1 3 0 4" stroke="#fff" /><path d="M10.500 3c2 2 2 6 0 8M12.500 1c3 3 3 9 0 12" stroke="#888" />
          </Svg>
        </Btn>
        <Btn label="Network" className="ml-[11px]">
          <Svg w={13} h={13}>
            <path d="M1 13C1 6 6 1.500 12.500 1.500M4 13c0-5 3.500-8.500 8.500-8.500M7 13c0-3 2.500-5.500 5.500-5.500" stroke="#bbb" strokeWidth="1.200" />
            <circle cx="11" cy="11.500" r="1.500" fill="#fff" />
          </Svg>
        </Btn>
        <button type="button" className="ml-[10px] w-[48px] text-center whitespace-nowrap">9:33 PM</button>
        <Btn label="Notifications" className="ml-[19px]">
          <Svg w={16} h={15}><path d="M.6.600h14.800v11H10L8 14l-2-2.400H.6z" stroke="#fff" strokeWidth="1.200" /></Svg>
        </Btn>
        <div className="mr-1 ml-5 h-[30px] w-px bg-[#555]" />
      </div>
    </footer>
  );
}

export default function App() {
  return (
    <div className="min-h-screen bg-white">
      <main className={`w-full max-w-7xl bg-[#dedede] text-black ${UI}`}>
        <TitleBar />
        <TabStrip />
        <Ribbon />
        <FormulaBar />
        <Sheet />
        <SheetTabs />
        <StatusBar />
        <Taskbar />
      </main>
    </div>
  );
}
